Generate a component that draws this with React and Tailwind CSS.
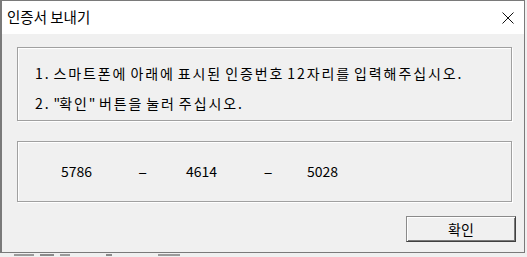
export default function App() {
  const ko = { fontFamily: '"Noto Sans CJK KR", "Noto Sans", sans-serif' };
  return (
    <div className="w-[527px] h-[257px] bg-[#f0f0f0] flex flex-col overflow-hidden" style={ko}>
      <div className="w-[525px] h-[253px] border border-[#7a7a7a] border-l-2 flex flex-col bg-[#f0f0f0]">
        <div className="h-[33px] bg-white flex items-center justify-between pl-[5px] pr-[10px] shrink-0">
          <span className="text-[14.5px] text-black leading-none">인증서 보내기</span>
          <svg width="12" height="12" viewBox="0 0 12 12" className="mt-[1px]">
            <path d="M0.5 0.5 L11.5 11.5 M11.5 0.5 L0.5 11.5" stroke="#111" strokeWidth="1" />
          </svg>
        </div>
        <div className="flex flex-col pl-[15px] pt-[13px]">
          <div className="w-[495px] h-[74px] border border-[#a0a0a0] shadow-[inset_1px_1px_0_#ffffff,1px_1px_0_#ffffff] flex flex-col pl-[17px] text-[14px] text-black tracking-[1.9px] [word-spacing:-2px]">
            <div className="mt-[15px] leading-[20px] whitespace-nowrap">1. 스마트폰에 아래에 표시된 인증번호 12자리를 입력해주십시오.</div>
            <div className="mt-[10px] leading-[20px] whitespace-nowrap">
              2. <span className="tracking-[0px] mr-[-1px]">"</span>확인<span className="tracking-[0.5px]">"</span> 버튼을 눌러 주십시오.
            </div>
          </div>
          <div className="mt-[20px] w-[495px] h-[61px] border border-[#a0a0a0] shadow-[inset_1px_1px_0_#ffffff,1px_1px_0_#ffffff] flex items-center text-[14px] text-black">
            <span className="ml-[43px] w-[30px] text-center">5786</span>
            <span className="ml-[47px] w-[9px] text-center inline-block scale-x-200">-</span>
            <span className="ml-[39px] w-[30px] text-center">4614</span>
            <span className="ml-[48px] w-[8px] text-center inline-block scale-x-200">-</span>
            <span className="ml-[35px] w-[30px] text-center">5028</span>
          </div>
          <div className="mt-[14px] flex justify-end pr-[8px]">
            <button className="w-[110px] h-[26px] bg-[#f0f0f0] border border-t-[#8a8a8a] border-l-[#8a8a8a] border-r-[#404040] border-b-[#404040] shadow-[inset_1px_1px_0_#ffffff,inset_-1px_-1px_0_#7a7a7a] text-[14px] text-black leading-none flex items-center justify-center">
              확인
            </button>
          </div>
        </div>
      </div>
      <div className="h-[4px] flex items-start gap-[6px] pl-[14px] pt-[1px]">
        <span className="w-[20px] h-[2px] bg-[#9a9a9a]" />
        <span className="w-[14px] h-[2px] bg-[#8a8a8a]" />
        <span className="w-[10px] h-[2px] bg-[#9a9a9a]" />
        <span className="w-[6px] h-[2px] bg-[#8a8a8a] ml-[30px]" />
        <span className="w-[22px] h-[2px] bg-[#9a9a9a] ml-[40px]" />
      </div>
    </div>
  );
}
